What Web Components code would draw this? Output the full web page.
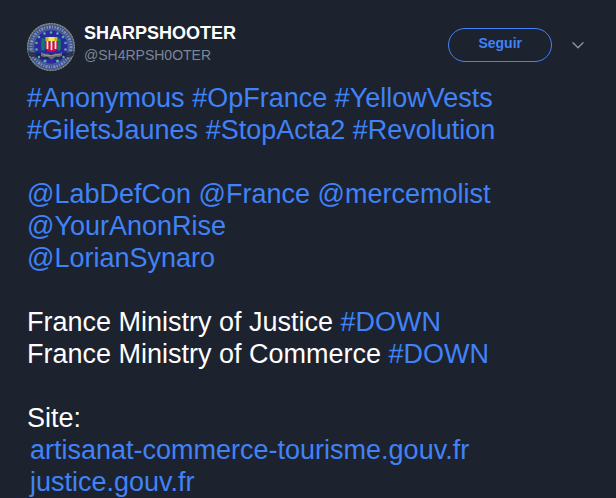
<!DOCTYPE html>
<html lang="fr">
<head>
<meta charset="utf-8">
<meta name="viewport" content="width=device-width, initial-scale=1">
<title>SHARPSHOOTER</title>
<style>
html { background: #1d222f; }
body { margin: 0; color: #fff; font-family: "Liberation Sans", Arial, sans-serif; --accent: #4083f7; --muted: #7a8799; }
</style>
</head>
<body>
<tweet-card>
  <seal-avatar slot="avatar"></seal-avatar>
  <span slot="name">SHARPSHOOTER</span>
  <span slot="handle">@SH4RPSH0OTER</span>
  <follow-button slot="actions">Seguir</follow-button>
  <menu-button slot="actions"></menu-button>
  <tweet-line><tweet-link>#Anonymous</tweet-link> <tweet-link>#OpFrance</tweet-link> <tweet-link>#YellowVests</tweet-link></tweet-line>
  <tweet-line><tweet-link>#GiletsJaunes</tweet-link> <tweet-link>#StopActa2</tweet-link> <tweet-link>#Revolution</tweet-link></tweet-line>
  <tweet-line gap><tweet-link>@LabDefCon</tweet-link> <tweet-link>@France</tweet-link> <tweet-link>@mercemolist</tweet-link></tweet-line>
  <tweet-line><tweet-link>@YourAnonRise</tweet-link></tweet-line>
  <tweet-line><tweet-link>@LorianSynaro</tweet-link></tweet-line>
  <tweet-line gap>France Ministry of Justice <tweet-link>#DOWN</tweet-link></tweet-line>
  <tweet-line>France Ministry of Commerce <tweet-link>#DOWN</tweet-link></tweet-line>
  <tweet-line gap>Site:</tweet-line>
  <tweet-line site><tweet-link>artisanat-commerce-tourisme.gouv.fr</tweet-link></tweet-line>
  <tweet-line site><tweet-link>justice.gouv.fr</tweet-link></tweet-line>
</tweet-card>
<script>
function define(name, html) {
  const template = document.createElement('template');
  template.innerHTML = html;
  customElements.define(name, class extends HTMLElement {
    constructor() {
      super();
      this.attachShadow({ mode: 'open' }).append(template.content.cloneNode(true));
    }
  });
}

define('tweet-card', `
<style>
:host { display: block; padding: 23px 26px 0 27px; }
header { display: flex; align-items: flex-start; gap: 9px; min-height: 59px; }
.who { flex: 1; min-width: 0; }
.name { font-size: 18px; line-height: 20px; font-weight: bold; }
.handle { font-size: 14px; line-height: 24px; color: var(--muted); }
.actions { display: flex; align-items: center; gap: 14px; padding-top: 5px; }
.text { font-size: 27px; line-height: 32px; }
</style>
<article>
  <header>
    <slot name="avatar"></slot>
    <div class="who"><div class="name"><slot name="name"></slot></div><div class="handle"><slot name="handle"></slot></div></div>
    <div class="actions"><slot name="actions"></slot></div>
  </header>
  <div class="text"><slot></slot></div>
</article>`);

define('tweet-line', `
<style>
:host { display: block; }
:host([gap]) { margin-top: 32px; }
:host([site]) { padding-left: 3px; }
</style><slot></slot>`);

define('tweet-link', `
<style>
:host { display: inline; }
a { color: var(--accent); text-decoration: none; }
</style><a href="#"><slot></slot></a>`);

define('follow-button', `
<style>
:host { display: block; }
button { box-sizing: border-box; height: 34px; padding: 0 29px 4px; border: 1px solid var(--accent); border-radius: 17px;
  background: none; color: var(--accent); font: bold 14px/20px "Liberation Sans", Arial, sans-serif; }
</style><button type="button"><slot></slot></button>`);

define('menu-button', `
<style>
:host { display: block; }
button { display: grid; place-items: center; width: 24px; height: 24px; padding: 0; border: 0; background: none; color: #8b93a3; }
svg { display: block; }
</style>
<button type="button" aria-label="Plus">
  <svg width="14" height="14" viewBox="0 0 14 14" fill="none" stroke="currentColor" stroke-width="1.4" stroke-linecap="round" stroke-linejoin="round"><path d="M2 4.700 7 9.700l5-5"/></svg>
</button>`);

define('seal-avatar', `
<style>
:host { display: block; }
svg { display: block; width: 48px; height: 48px; }
</style>
<svg viewBox="0 0 48 48" aria-hidden="true">
  <circle cx="24" cy="24" r="24" fill="#586a70"/>
  <circle cx="24" cy="24" r="23.300" fill="none" stroke="#8b9870" stroke-width="1.200" stroke-dasharray="1.600 1.200"/>
  <circle cx="24" cy="24" r="20" fill="none" stroke="#40509a" stroke-width="5"/>
  <circle cx="24" cy="24" r="20" fill="none" stroke="#7f90b4" stroke-width="3" stroke-dasharray="1.300 1.100 2 1.200 1 1.500"/>
  <circle cx="24" cy="24" r="17.200" fill="#2d27a0" stroke="#4c6688" stroke-width="1"/>
  <path d="M1 28q10 3 23 3t23-3l-1 5q-8 3-22 3t-22-3z" fill="#1c243b" opacity=".75"/>
  <g fill="#4db39f">
    <circle cx="24" cy="9.500" r="1.300"/><circle cx="17.500" cy="10.500" r="1.300"/><circle cx="30.500" cy="10.500" r="1.300"/>
    <circle cx="12" cy="14" r="1.300"/><circle cx="36" cy="14" r="1.300"/><circle cx="9.500" cy="20" r="1.300"/>
    <circle cx="38.500" cy="20" r="1.300"/><circle cx="9.500" cy="26.500" r="1.300"/><circle cx="38.500" cy="26.500" r="1.300"/>
    <circle cx="18" cy="38" r="1.600"/><circle cx="30.500" cy="38" r="1.600"/><circle cx="12" cy="34" r="1.200"/><circle cx="36.500" cy="34" r="1.200"/>
  </g>
  <path d="M16 17v9M32 17v9" fill="none" stroke="#117a68" stroke-width="3.600" stroke-linecap="round"/>
  <path d="M18 15h13v10q-1 3-6.500 4-5.500-1-6.500-4z" fill="#c8104a"/>
  <path d="M20.500 18v8M24.500 18v9M28.500 18v8" stroke="#f7e6d4" stroke-width="1.700"/>
  <path d="M18.500 14h12v4h-12z" fill="#b9b52c"/>
  <path d="M21.500 14h6v4h-6z" fill="#f4ea4d"/>
  <path d="M14 29q3 2.500 6.500 1.500l4 2 4-2q4 1 6.500-1.500v4q-4 1.500-6 .5l-4.500 3-4.500-3q-3 1-6-.5z" fill="#68707c"/>
  <path d="M16 31.500q4 2 8.500 1t8.500-1" fill="none" stroke="#9b9b9c" stroke-width="1"/>
</svg>`);
</script>
</body>
</html>
